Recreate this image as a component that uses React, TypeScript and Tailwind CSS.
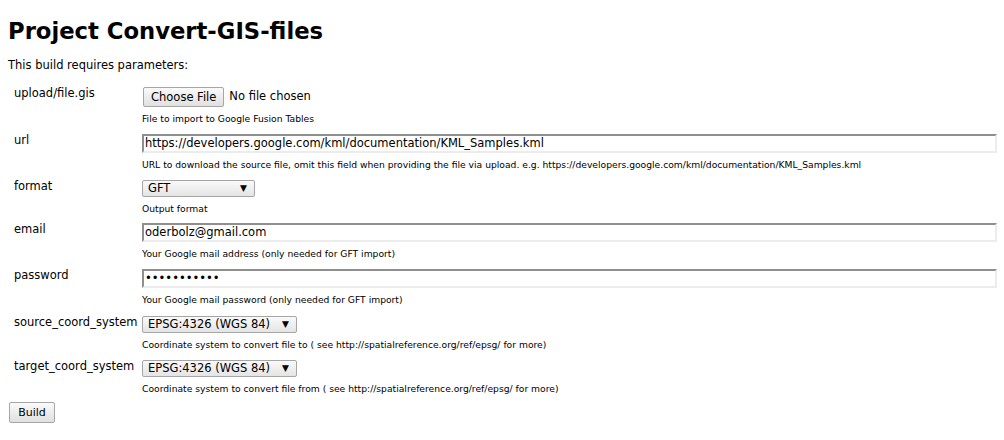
import React from "react";

const inputCls =
  "h-[19px] w-full border-2 border-t-[#8f8f8f] border-l-[#8f8f8f] border-b-[#ececec] border-r-[#ececec] bg-white pl-[1px] text-[11.5px] leading-[15px] text-black whitespace-nowrap overflow-hidden";

function Select({ value, w }: { value: string; w: string }) {
  return (
    <div
      className={`${w} h-[17px] flex items-center justify-between whitespace-nowrap rounded-[2px] border border-[#a6a6a6] bg-gradient-to-b from-[#fafafa] to-[#e4e4e4] pl-[5px] pr-[7px] text-[11.5px] leading-[15px]`}
    >
      <span>{value}</span>
      <span className="text-[9px]">▼</span>
    </div>
  );
}

function Row({
  label,
  children,
  desc,
  h,
}: {
  label: string;
  children: React.ReactNode;
  desc: string;
  h: string;
}) {
  return (
    <div className={`flex ${h}`}>
      <div className="w-[134px] shrink-0 pl-[6px] text-[11.5px] leading-[12px] whitespace-nowrap">{label}</div>
      <div className="flex-1 flex flex-col">
        {children}
        <div className="text-[9.2px] leading-[11px] mt-[6px] whitespace-nowrap">{desc}</div>
      </div>
    </div>
  );
}

export default function App() {
  return (
    <div className="w-[1004px] h-[440px] overflow-hidden bg-white text-black font-['DejaVu_Sans',sans-serif]">
      <div className="pl-[8px] pr-[7px]">
        <h1 className="text-[22.7px] font-bold leading-[28px] pt-[17px]">Project Convert-GIS-files</h1>
        <p className="text-[11.5px] leading-[13px] mt-[14px]">This build requires parameters:</p>
        <div className="mt-[15px]">
          <Row label="upload/file.gis" desc="File to import to Google Fusion Tables" h="h-[47px]">
            <div className="flex items-center gap-[5px] h-[20px]">
              <button className="h-[20px] px-[7px] rounded-[2px] border border-[#a6a6a6] bg-gradient-to-b from-[#fafafa] to-[#e0e0e0] text-[11.5px] leading-[15px] ml-[1px]">
                Choose File
              </button>
              <span className="text-[11.5px]">No file chosen</span>
            </div>
          </Row>
          <Row
            label="url"
            desc="URL to download the source file, omit this field when providing the file via upload. e.g. https://developers.google.com/kml/documentation/KML_Samples.kml"
            h="h-[46px]"
          >
            <div className={inputCls}>https://developers.google.com/kml/documentation/KML_Samples.kml</div>
          </Row>
          <Row label="format" desc="Output format" h="h-[43px]">
            <Select value="GFT" w="w-[113px]" />
          </Row>
          <Row label="email" desc="Your Google mail address (only needed for GFT import)" h="h-[46px]">
            <div className={inputCls}>oderbolz@gmail.com</div>
          </Row>
          <Row label="password" desc="Your Google mail password (only needed for GFT import)" h="h-[47px]">
            <div className={inputCls}>•••••••••••</div>
          </Row>
          <Row
            label="source_coord_system"
            desc="Coordinate system to convert file to ( see http://spatialreference.org/ref/epsg/ for more)"
            h="h-[44px]"
          >
            <Select value="EPSG:4326 (WGS 84)" w="w-[155px]" />
          </Row>
          <Row
            label="target_coord_system"
            desc="Coordinate system to convert file from ( see http://spatialreference.org/ref/epsg/ for more)"
            h="h-[42px]"
          >
            <Select value="EPSG:4326 (WGS 84)" w="w-[155px]" />
          </Row>
        </div>
        <div className="flex">
          <button className="block h-[21px] w-[46px] ml-[1px] rounded-[2px] border border-[#a6a6a6] bg-gradient-to-b from-[#fafafa] to-[#e0e0e0] text-[11px] leading-[13px]">
            Build
          </button>
        </div>
      </div>
    </div>
  );
}
